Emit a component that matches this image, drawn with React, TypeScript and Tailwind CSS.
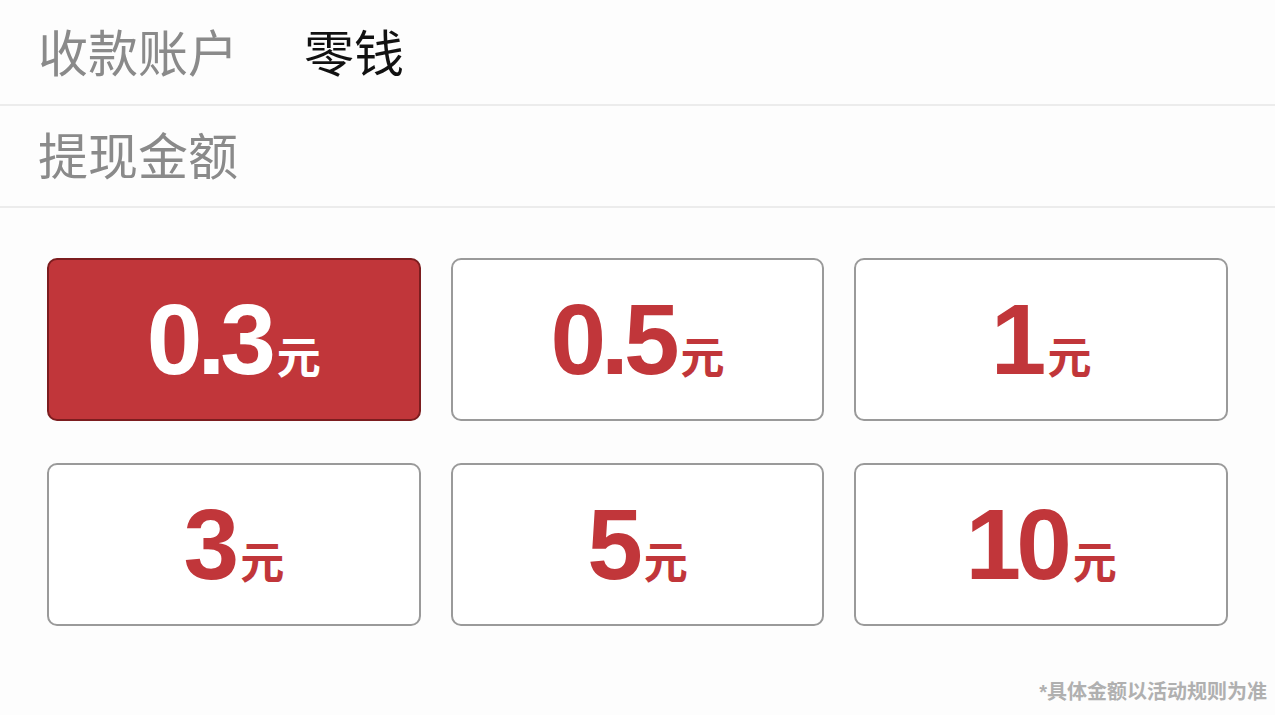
const amounts = ["0.3", "0.5", "1", "3", "5", "10"];

const font = { fontFamily: '"Liberation Sans", Arial, "Noto Sans CJK SC", sans-serif' };

export default function App() {
  const selected = "0.3";

  return (
    <div className="flex h-[715px] w-[1275px] flex-col bg-[#fdfdfd]" style={font}>
      <div className="flex h-[106px] items-center gap-[66px] border-b-2 border-[#ececec] pl-[38px] pt-[6px]">
        <span className="text-[50px] text-[#8a8a8a]">收款账户</span>
        <span className="text-[50px] text-[#111]">零钱</span>
      </div>
      <div className="flex h-[102px] items-center border-b-2 border-[#ececec] pl-[38px] pt-[4px]">
        <span className="text-[50px] text-[#8a8a8a]">提现金额</span>
      </div>

      <div className="grid grid-cols-3 gap-x-[30px] gap-y-[42px] px-[47px] pt-[50px]">
        {amounts.map((a) => {
          const on = a === selected;
          return (
            <button
              key={a}
              type="button"
              className={`flex h-[163px] items-center justify-center rounded-[10px] border-2 pb-[2px] font-bold ${
                on ? "border-[#7c1d1f] bg-[#c1363a] text-white" : "border-[#9a9a9a] bg-white text-[#c1363a]"
              }`}
            >
              <span className="flex items-baseline leading-none">
                <span className="text-[100px] tracking-[-5px]">{a}</span>
                <span className="ml-[6px] text-[44px]">元</span>
              </span>
            </button>
          );
        })}
      </div>

      <div className="mt-auto flex justify-end pb-[8px] pr-[8px]">
        <span className="text-[20px] font-bold text-[#b0b0b0]">*具体金额以活动规则为准</span>
      </div>
    </div>
  );
}
